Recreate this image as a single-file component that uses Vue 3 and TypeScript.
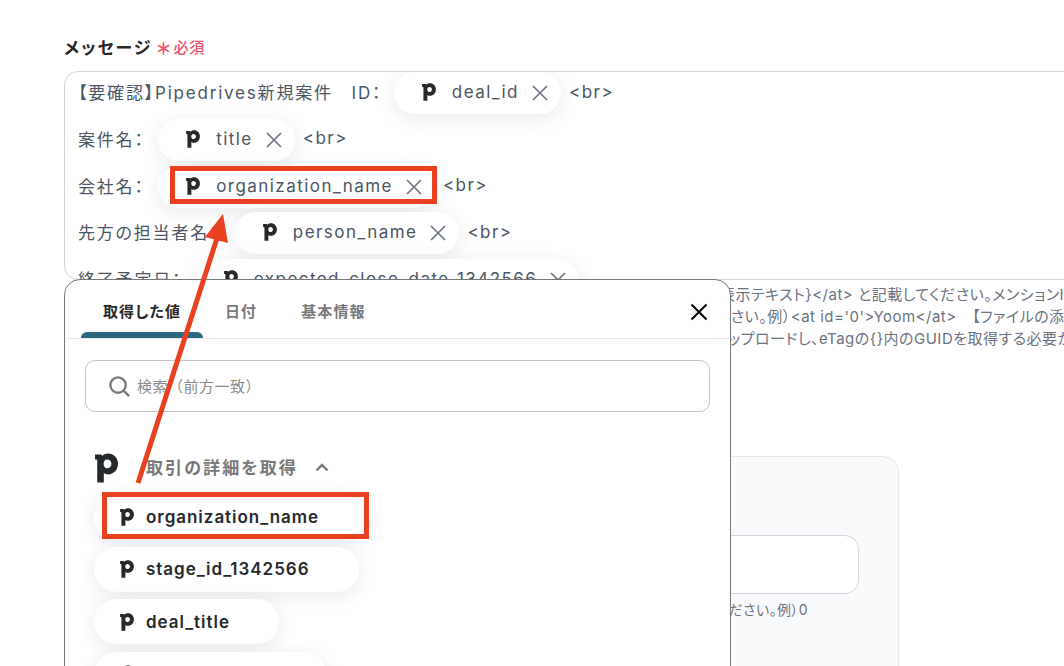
<script setup lang="ts">
interface Part { label: string; chip: string; tail: string }
const rows: Part[] = [
  { label: '【要確認】Pipedrives新規案件　ID：', chip: 'deal_id', tail: '<br>' },
  { label: '案件名：', chip: 'title', tail: '<br>' },
  { label: '会社名：', chip: 'organization_name', tail: '<br>' },
  { label: '先方の担当者名：', chip: 'person_name', tail: '<br>' },
  { label: '終了予定日：', chip: 'expected_close_date_1342566', tail: '' },
]
const tabs = ['取得した値', '日付', '基本情報']
const items = ['organization_name', 'stage_id_1342566', 'deal_title', 'person_emails']
const pPath = 'M0 1.5H5.5C6.5 1.5 7.2 2.2 7.4 3C8.8 1.3 11 .6 13 .6C18.8 .6 23 5 23 10.8C23 16.6 18.8 21.4 13.2 21.4C11.2 21.4 9.8 20.8 8.8 19.8V29.5H2.2V7.4C2.2 6.8 1.9 6.5 1.3 6.5H0ZM12.2 6.6C10 6.6 8.6 8.4 8.6 10.9C8.6 13.4 10 15.2 12.2 15.2C14.6 15.2 16.4 13.4 16.4 10.9C16.4 8.4 14.6 6.6 12.2 6.6Z'
</script>

<template>
  <div class="page">
    <div class="field-label">
      <span class="label-text">メッセージ</span>
      <span class="star">＊</span>
      <span class="required">必須</span>
    </div>

    <div class="message-box">
      <div v-for="row in rows" :key="row.chip" class="msg-row">
        <span class="msg-text">{{ row.label }}</span>
        <span class="chip">
          <svg class="p-icon" viewBox="0 0 23 30"><path :d="pPath" fill-rule="evenodd" /></svg>
          <span>{{ row.chip }}</span>
          <svg class="x-icon" viewBox="0 0 16 16"><path d="M1 1L15 15M15 1L1 15" /></svg>
        </span>
        <span class="msg-tail">{{ row.tail }}</span>
      </div>
    </div>

    <div class="help">
      <div class="help-1">表示テキスト}&lt;/at&gt; と記載してください。メンションIDを確認</div>
      <div class="help-2">ださい。例）&lt;at id='0'&gt;Yoom&lt;/at&gt;　【ファイルの添付について】</div>
      <div class="help-3">アップロードし、eTagの{}内のGUIDを取得する必要があります。</div>
    </div>

    <div class="sub-card">
      <div class="sub-input"></div>
      <div class="sub-hint">ださい。例）0</div>
    </div>

    <section class="modal">
      <header class="tabs">
        <div v-for="(t, i) in tabs" :key="t" class="tab" :class="{ active: i === 0 }">{{ t }}</div>
        <svg class="close" viewBox="0 0 18 18"><path d="M1.5 1.5L16.5 16.5M16.5 1.5L1.5 16.5" /></svg>
      </header>
      <div class="modal-body">
        <div class="search">
          <svg class="search-icon" viewBox="0 0 24 24"><circle cx="10.5" cy="10.5" r="8" /><path d="M16.5 16.5L22 22" /></svg>
          <span>検索（前方一致）</span>
        </div>
        <div class="section-head">
          <svg class="p-large" viewBox="0 0 23 30"><path :d="pPath" fill-rule="evenodd" /></svg>
          <span class="section-title">取引の詳細を取得</span>
          <svg class="chevron" viewBox="0 0 14 9"><path d="M1.5 7.5L7 2L12.5 7.5" /></svg>
        </div>
        <div class="list">
          <div v-for="item in items" :key="item" class="list-chip">
            <svg class="p-list" viewBox="0 0 23 30"><path :d="pPath" fill-rule="evenodd" /></svg>
            <span>{{ item }}</span>
          </div>
        </div>
      </div>
    </section>

    <div class="mark mark-top"></div>
    <div class="mark mark-bottom"></div>
    <svg class="arrow" viewBox="0 0 1064 666">
      <path d="M138 483L219 232" />
      <polygon points="223,214 205,237 228,243" />
    </svg>
  </div>
</template>

<style>
html, body { margin: 0; background: #fff; }
</style>

<style scoped>
.page {
  position: relative;
  width: 1064px;
  height: 666px;
  overflow: hidden;
  background: #fff;
  padding: 35px 0 0 64px;
  box-sizing: border-box;
  font-family: Inter, "Noto Sans CJK JP", sans-serif;
  font-feature-settings: "palt";
  font-size: 17px;
  letter-spacing: 1.45px;
  color: #4b5563;
}
.field-label { display: flex; align-items: center; height: 22px; color: #27272a; }
.label-text { font-weight: 600; letter-spacing: 2px; }
.star { color: #ef5365; font-size: 17px; margin-left: 4px; width: 15px; letter-spacing: 0; font-weight: 700; margin-top: 3px; }
.required { color: #ef5365; font-size: 15px; letter-spacing: 0.05em; margin-left: 2px; font-weight: 500; }
.message-box {
  box-sizing: border-box;
  width: 1100px;
  height: 209px;
  margin-top: 14px;
  padding: 0 0 0 13px;
  border: 1px solid #d1d5db;
  border-radius: 14px;
  overflow: hidden;
  display: flex;
  flex-direction: column;
  gap: 4.75px;
}
.msg-row { display: flex; align-items: center; height: 42px; flex: none; }
.msg-text { margin-top: -3px; white-space: pre; letter-spacing: 1.8px; }
.msg-tail { margin-top: -3px; white-space: pre; }
.chip {
  display: inline-flex;
  align-items: center;
  height: 42px;
  margin: 0 8px 0 13.5px;
  padding: 0 13px 0 28px;
  border-radius: 21px;
  background: #fff;
  box-shadow: 0 4px 20px rgba(0, 0, 0, 0.09);
  white-space: nowrap;
}
.msg-row:nth-child(1) .chip { margin-left: 11.5px; }
.msg-row:nth-child(4) .chip { margin-left: 15.5px; }
.chip > span { margin-top: -2px; }
.p-icon { width: 14px; height: 18px; margin-right: 16px; fill: #26292c; flex: none; margin-top: -2px; }
.x-icon { width: 16px; height: 16px; margin-left: 13px; fill: none; stroke: #6b7280; stroke-width: 1.6; flex: none; }
.help {
  margin-top: 4px;
  font-size: 15px;
  letter-spacing: 0.5px;
  line-height: 22px;
  color: #6b7280;
  white-space: nowrap;
}
.help-1 { padding-left: 656px; }
.help-2 { padding-left: 651px; }
.help-3 { padding-left: 650px; }
.sub-card {
  box-sizing: border-box;
  position: relative;
  width: 503px;
  height: 300px;
  margin: 106px 0 0 332px;
  padding: 78px 39px 0 20px;
  background: #f9fafb;
  border: 1px solid #e5e7eb;
  border-radius: 16px;
}
.sub-input {
  height: 59px;
  box-sizing: border-box;
  background: #fff;
  border: 1px solid #d1d5db;
  border-radius: 14px;
}
.sub-hint {
  margin-top: 5px;
  text-align: right;
  padding-right: 51px;
  font-size: 14px;
  letter-spacing: 0.4px;
  color: #6b7280;
}
.modal {
  position: absolute;
  left: 64px;
  top: 279px;
  width: 667px;
  height: 420px;
  box-sizing: border-box;
  background: #fff;
  border: 1px solid #777;
  border-radius: 16px;
}
.tabs {
  position: relative;
  display: flex;
  height: 58px;
  margin-left: 2px;
  border-bottom: 1px solid #e5e7eb;
  padding-left: 14px;
}
.tab {
  box-sizing: border-box;
  padding: 20px 22px 0;
  height: 58px;
  font-size: 15px;
  letter-spacing: 1.1px;
  font-weight: 600;
  color: #787878;
  position: relative;
  white-space: nowrap;
}
.tab.active { color: #27272a; width: 122px; }
.tab.active::after {
  content: "";
  position: absolute;
  left: 0;
  right: 0;
  bottom: 0;
  height: 6px;
  background: #2d667f;
  border-radius: 6px 6px 0 0;
}
.close {
  position: absolute;
  right: 22px;
  top: 23px;
  width: 18px;
  height: 18px;
  fill: none;
  stroke: #000;
  stroke-width: 2;
}
.modal-body { padding: 21px 20px 0 20px; }
.search {
  box-sizing: border-box;
  height: 52px;
  display: flex;
  align-items: center;
  padding-left: 22px;
  border: 1px solid #c4c4c4;
  border-radius: 10px;
  font-size: 15px;
  font-feature-settings: normal;
  letter-spacing: 0.5px;
  color: #8a8a8a;
}
.search > span { margin-top: -2px; }
.search-icon { width: 23px; height: 23px; margin-right: 6px; fill: none; stroke: #787878; stroke-width: 2.4; }
.section-head { display: flex; align-items: center; height: 32px; margin: 39px 0 0 10px; }
.p-large { width: 23px; height: 30px; fill: #26292c; margin-right: 28px; margin-top: 2px; }
.section-title { font-size: 17px; font-weight: 600; letter-spacing: 2.1px; color: #787878; margin-top: -2px; }
.chevron { width: 14px; height: 9px; margin-left: 17px; fill: none; stroke: #787878; stroke-width: 2.4; }
.list { display: flex; flex-direction: column; align-items: flex-start; gap: 7.5px; margin: 11px 0 0 9px; }
.list-chip {
  display: flex;
  align-items: center;
  height: 45px;
  padding: 0 49px 0 26px;
  background: #fff;
  border-radius: 23px;
  box-shadow: 0 4px 20px rgba(0, 0, 0, 0.09);
  font-weight: 600;
  letter-spacing: 0.97px;
  color: #26292c;
  white-space: nowrap;
}
.p-list { width: 14px; height: 18px; margin-right: 12px; fill: #26292c; flex: none; }
.mark { position: absolute; box-sizing: border-box; border: 5px solid #e9401f; }
.mark-top { left: 170px; top: 166px; width: 267px; height: 38px; }
.mark-bottom { left: 102px; top: 492px; width: 267px; height: 47px; background: transparent; }
.arrow { position: absolute; left: 0; top: 0; width: 1064px; height: 666px; pointer-events: none; }
.arrow path { stroke: #e9401f; stroke-width: 5; fill: none; }
.arrow polygon { fill: #e9401f; }
</style>
